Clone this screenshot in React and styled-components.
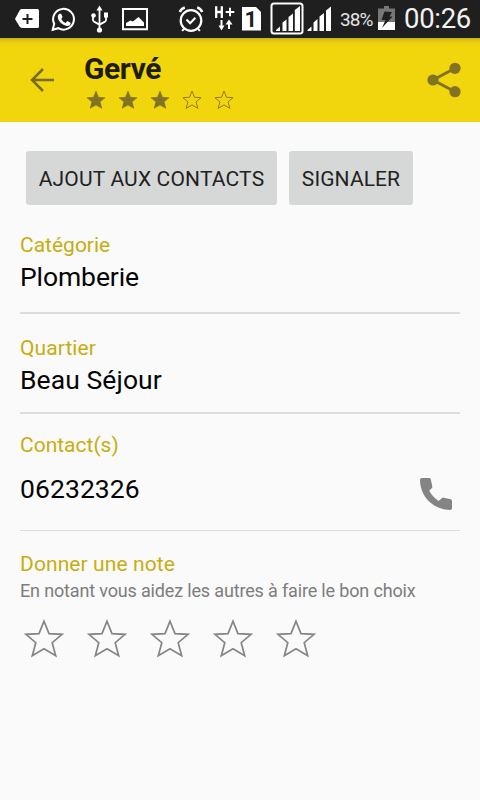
import React from "react";
import styled, { createGlobalStyle } from "styled-components";

const GlobalStyle = createGlobalStyle`
  * { box-sizing: border-box; }
  body { margin: 0; background: #fafafa; font-family: Roboto, sans-serif; }
`;

const Screen = styled.div`
  width: 480px;
  height: 800px;
  overflow: hidden;
  background: #fafafa;
`;

const StatusBar = styled.header`
  display: flex;
  justify-content: space-between;
  height: 38px;
  background: #1f1f1f;
`;

const StatusIcons = styled.svg`
  display: block;
  flex: none;
  width: ${(p) => p.$width}px;
  height: 38px;
`;

const StatusRight = styled.div`
  display: flex;
  height: 38px;
`;

const Percent = styled.span`
  width: 38px;
  color: #e4e4e4;
  font-size: 19px;
  line-height: 39px;
  letter-spacing: -0.9px;
  white-space: nowrap;
`;

const Clock = styled.span`
  width: 76px;
  color: #f2f2f2;
  font-size: 27.5px;
  line-height: 38px;
  letter-spacing: -0.3px;
  white-space: nowrap;
`;

const AppBar = styled.div`
  display: flex;
  height: 84px;
  padding: 0 18px 0 29px;
  background: linear-gradient(#c4af12 0, #dcc410 2px, #ebd10e 5px, #f1d60d 9px);
`;

const BackIcon = styled.svg`
  width: 26px;
  height: 26px;
  margin-top: 29px;
`;

const Heading = styled.div`
  flex: 1;
  padding: 13px 0 0 29px;
`;

const Title = styled.h1`
  margin: 0;
  height: 36px;
  color: #1f1c04;
  font-size: 30px;
  font-weight: 700;
  line-height: 35px;
  letter-spacing: -0.4px;
`;

const SmallStars = styled.div`
  display: flex;
  gap: 12px;
  margin: 3px 0 0 2px;
`;

const ShareIcon = styled.svg`
  width: 36px;
  height: 36px;
  margin-top: 24px;
`;

const Content = styled.main`
  padding: 29px 20px 0;
`;

const Actions = styled.div`
  display: flex;
  gap: 12px;
  padding-left: 6px;
`;

const ActionButton = styled.button`
  width: ${(p) => p.$width}px;
  height: 54px;
  padding: 0;
  border: 0;
  border-radius: 3px;
  background: #d6d8d7;
  color: #212222;
  font-family: inherit;
  font-size: 21px;
  line-height: 56px;
  letter-spacing: ${(p) => p.$tracking}px;
  white-space: nowrap;
`;

const Field = styled.section`
  height: ${(p) => p.$height}px;
  padding-top: ${(p) => p.$top}px;
  border-bottom: ${(p) => p.$rule}px solid #dcdcdc;
`;

const Label = styled.div`
  height: 26px;
  color: #c6ae10;
  font-size: 21px;
  line-height: 26px;
  letter-spacing: ${(p) => p.$tracking || 0}px;
  white-space: nowrap;
`;

const Value = styled.div`
  height: 32px;
  margin-top: ${(p) => p.$gap}px;
  color: #050505;
  font-size: 26.5px;
  line-height: 31px;
  letter-spacing: ${(p) => p.$tracking || 0}px;
  white-space: nowrap;
`;

const ContactRow = styled.div`
  display: flex;
  justify-content: space-between;
  padding-right: 8px;
`;

const PhoneIcon = styled.svg`
  width: 32px;
  height: 32px;
  margin-top: 20px;
`;

const Hint = styled.div`
  height: 24px;
  margin-top: 2px;
  color: #7d7d7d;
  font-size: 18px;
  line-height: 24px;
  letter-spacing: -0.16px;
  white-space: nowrap;
`;

const LargeStars = styled.div`
  display: flex;
  gap: 23px;
  margin: 16px 0 0 4px;
`;

const StarSvg = styled.svg`
  display: block;
  flex: none;
  width: ${(p) => p.$size}px;
  height: ${(p) => p.$size}px;
`;

const STAR = "M20 2.2 L25 14.600 L38 15.300 L28.200 23.700 L31.700 36.700 L20 29.800 L8.300 36.700 L11.800 23.700 L2 15.300 L15 14.600 Z";

function Star({ size, filled, color, stroke }) {
  return (
    <StarSvg $size={size} viewBox="0 0 40 40">
      <path d={STAR} fill={filled ? color : "none"} stroke={color} strokeWidth={filled ? 1.2 : stroke} />
    </StarSvg>
  );
}

function LeftIcons() {
  return (
    <StatusIcons $width={160} viewBox="0 0 160 38" fill="none" stroke="#fff">
      <path d="M22 9h15.500q1.500 0 1.500 1.500v16q0 1.500-1.500 1.500H22q-1.500 0-2.400-1.400L15 19l4.600-8.600Q20.500 9 22 9Z" fill="#fff" stroke="none" />
      <path d="M27.500 14v10M22.500 19h10" stroke="#1f1f1f" strokeWidth="2" />
      <path d="M52.700 29.800l1.500-6A10.400 10.400 0 1 1 58.300 28.200Z" strokeWidth="2" />
      <path d="M59.500 13.800l1.600-.1 1.500 3.400-1.300 1.800c1 2 2.400 3.200 4.300 4l1.700-1.800 3.300 1.600c.3 2-1.200 3.400-3.500 3.300-5.200-.6-9.100-5-9.300-8.900 0-1.600.7-2.700 1.700-3.300Z" fill="#fff" stroke="none" />
      <path d="M99.500 9v22M93 16v4q0 1 1 1.600l5.500 3M106 15v5q0 1-1 1.600l-5.500 3" strokeWidth="1.800" />
      <path d="M99.500 5.500l3 5h-6ZM104 12.500h4v5h-4Z" fill="#fff" stroke="none" />
      <circle cx="93.500" cy="15.500" r="2.300" fill="#fff" stroke="none" />
      <circle cx="99.500" cy="30" r="2.600" fill="#fff" stroke="none" />
      <path d="M123 9h24v20.200h-24Z" strokeWidth="2" />
      <path d="M126 26v-3l4.500-2.500 2.500 1 5.500-4.500 5.500 5.500V26Z" fill="#fff" stroke="none" />
    </StatusIcons>
  );
}

const SimNumber = styled.text`
  font: 700 22px Roboto, sans-serif;
`;

function NetworkIcons() {
  return (
    <StatusIcons $width={164} viewBox="176 0 164 38" fill="none" stroke="#fff">
      <circle cx="191" cy="20.500" r="10.300" strokeWidth="2.200" />
      <path d="M186.500 19.500l3.600 3.700 5.300-5.500M184.200 28.300l-2 2.700M197.800 28.300l2 2.700" strokeWidth="2" />
      <path d="M179.800 12q1.500-3.500 5-4.500M202.200 12q-1.500-3.500-5-4.500" strokeWidth="2.600" />
      <path d="M216.200 6.300v11.700M221.800 6.300v11.700M216 12h6" strokeWidth="2.300" />
      <path d="M225.700 12h8.600M230 7.700v8.600" strokeWidth="2" />
      <path d="M221.500 20v7M229 29v-6" strokeWidth="2" />
      <path d="M218.500 25.500h6l-3 5ZM225.500 24.500h7l-3.500-5Z" fill="#fff" stroke="none" />
      <path d="M242 7h14l5 5v18.500h-19Z" fill="#fff" stroke="none" />
      <SimNumber x="244.500" y="27" fill="#1f1f1f" stroke="none">1</SimNumber>
      <rect x="271.500" y="3.500" width="31" height="30" rx="2.500" strokeWidth="2" />
      <path d="M276 31v-1l4-3.500V31ZM282.500 31v-8.500l4-3V31ZM288.500 31V17l4.500-3.500V31ZM294.800 31V10l5.200-4v25ZM307.500 31v-1l4-3.500V31ZM313.500 31v-8.500l4-3.500v12ZM319.500 31V16.500l4.500-3.500v18ZM326 31V10.500l5-4V31Z" fill="#fff" stroke="none" />
    </StatusIcons>
  );
}

export default function App() {
  return (
    <>
      <GlobalStyle />
      <Screen>
        <StatusBar>
          <LeftIcons />
          <StatusRight>
            <NetworkIcons />
            <Percent>38%</Percent>
            <StatusIcons $width={26} viewBox="378 0 26 38">
              <path d="M378 8.500h6V6h5v2.500h6V22h-17Z" fill="#777" />
              <path d="M378 22h17v8h-17Z" fill="#fff" />
              <path d="M384.500 11.500l7.500.5-2.500 4.500h3L382 28l3.500-8h-4Z" fill="#1f1f1f" />
            </StatusIcons>
            <Clock>00:26</Clock>
          </StatusRight>
        </StatusBar>
        <AppBar>
          <BackIcon viewBox="0 0 26 26" fill="none" stroke="#786b08" strokeWidth="2.500">
            <path d="M25 13H3M14 2L3 13l11 11" />
          </BackIcon>
          <Heading>
            <Title>Gervé</Title>
            <SmallStars>
              {[1, 2, 3, 4, 5].map((n) => (
                <Star key={n} size={20} filled={n <= 3} color="#817323" stroke={1.8} />
              ))}
            </SmallStars>
          </Heading>
          <ShareIcon viewBox="426 62 36 36">
            <path d="M455 68.300L433 80l22 11.700" fill="none" stroke="#817323" strokeWidth="3" />
            <g fill="#817323">
              <circle cx="433" cy="80" r="5.600" />
              <circle cx="455" cy="68.300" r="5.600" />
              <circle cx="455" cy="91.700" r="5.600" />
            </g>
          </ShareIcon>
        </AppBar>
        <Content>
          <Actions>
            <ActionButton $width={251} $tracking={0.17}>AJOUT AUX CONTACTS</ActionButton>
            <ActionButton $width={124} $tracking={0.1}>SIGNALER</ActionButton>
          </Actions>
          <Field $height={109} $top={27} $rule={2}>
            <Label>Catégorie</Label>
            <Value $gap={3} $tracking={-0.1}>Plomberie</Value>
          </Field>
          <Field $height={100} $top={21} $rule={2}>
            <Label $tracking={0.08}>Quartier</Label>
            <Value $gap={3} $tracking={0.08}>Beau Séjour</Value>
          </Field>
          <Field $height={117} $top={18} $rule={1}>
            <Label>Contact(s)</Label>
            <ContactRow>
              <Value $gap={15} $tracking={0.08}>06232326</Value>
              <PhoneIcon viewBox="3 3 18 18">
                <path fill="#848484" d="M8.200 10.200C9.200 12.200 11.200 14.400 13.500 15.900L15.400 14.200Q15.800 13.900 16.400 14.100L20.300 14.900Q21 15 21 15.800V20Q21 21 20 21C10.600 21 3 13.400 3 4Q3 3 4 3H8.200Q9 3 9.100 3.800L9.900 7.600Q10.100 8.300 9.600 8.800Z" />
              </PhoneIcon>
            </ContactRow>
          </Field>
          <section>
            <Field as="div" $height={46} $top={20} $rule={0}>
              <Label $tracking={0.1}>Donner une note</Label>
            </Field>
            <Hint>En notant vous aidez les autres à faire le bon choix</Hint>
            <LargeStars>
              {[1, 2, 3, 4, 5].map((n) => (
                <Star key={n} size={40} color="#858585" stroke={1.7} />
              ))}
            </LargeStars>
          </section>
        </Content>
      </Screen>
    </>
  );
}
